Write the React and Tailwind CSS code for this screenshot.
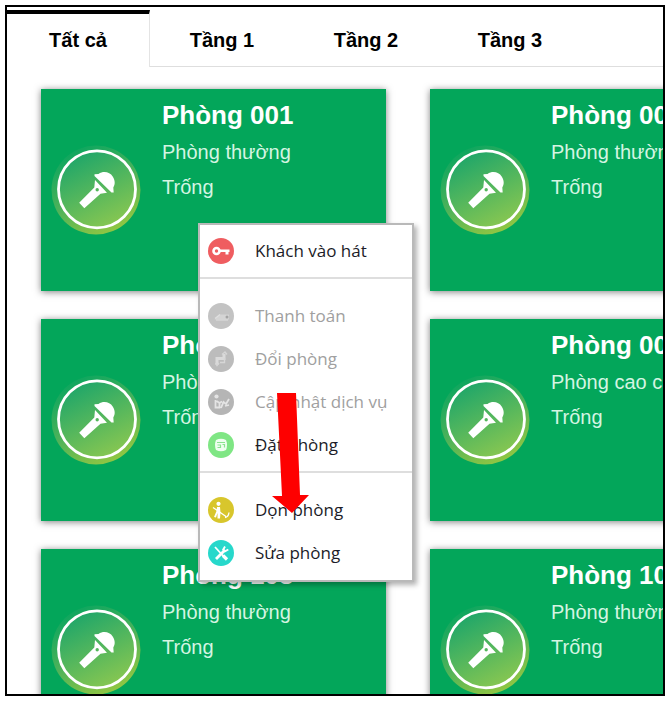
import React, { useState } from "react";

const tabs = ["Tất cả", "Tầng 1", "Tầng 2", "Tầng 3"];

const rooms = [
  { name: "Phòng 001", type: "Phòng thường", status: "Trống" },
  { name: "Phòng 002", type: "Phòng thường", status: "Trống" },
  { name: "Phòng 003", type: "Phòng thường", status: "Trống" },
  { name: "Phòng 004", type: "Phòng cao cấp", status: "Trống" },
  { name: "Phòng 103", type: "Phòng thường", status: "Trống" },
  { name: "Phòng 104", type: "Phòng thường", status: "Trống" },
];

function MicBadge() {
  return (
    <svg viewBox="0 0 90 90" className="h-[90px] w-[90px] shrink-0" aria-hidden="true">
      <defs>
        <linearGradient id="micFill" x1="0.25" y1="0" x2="0.75" y2="1">
          <stop offset="0" stopColor="#1ba56a" />
          <stop offset="1" stopColor="#8cc850" />
        </linearGradient>
        <linearGradient id="micHalo" x1="0.25" y1="0" x2="0.75" y2="1">
          <stop offset="0" stopColor="#08a55f" />
          <stop offset="0.5" stopColor="#4cb25a" />
          <stop offset="1" stopColor="#98c840" />
        </linearGradient>
      </defs>
      <circle cx="45" cy="45" r="44.500" fill="url(#micHalo)" />
      <circle cx="46" cy="44.300" r="38.500" fill="url(#micFill)" stroke="#fff" strokeWidth="2.800" />
      <path
        fill="#fff"
        fillRule="evenodd"
        d="M44 35 L56 47.800 L49.500 48.800 L33.300 63.200 L28.200 57.800 L43.300 42.500 Z M44.500 44.700 a1.700 1.700 0 1 0 3.400 0 a1.700 1.700 0 1 0 -3.400 0 Z"
      />
      <path fill="#fff" d="M43.500 29.300 L47.500 29 C53 25.300 59 27.500 61.700 31.500 C64.300 35.500 64.300 39.500 62.300 42.500 L62.700 47.500 L60.500 47.500 L43.500 31 Z" />
    </svg>
  );
}

function RoomCard({ room }) {
  return (
    <article className="flex h-[202px] gap-[21px] bg-[#03a65a] pl-[10px] text-white shadow-[0_1px_7px_rgba(0,0,0,0.5)]">
      <div className="flex items-center">
        <MicBadge />
      </div>
      <div className="flex flex-col pt-[6px] whitespace-nowrap">
        <h2 className="text-[26px] leading-10 font-bold">{room.name}</h2>
        <p className="text-xl leading-[35px] text-[#d4f5e2]">{room.type}</p>
        <p className="text-xl leading-[35px] text-[#d4f5e2]">{room.status}</p>
      </div>
    </article>
  );
}

const glyphs = {
  key: (
    <>
      <circle cx="8.500" cy="13" r="3" fill="none" stroke="#fff" strokeWidth="2.600" />
      <path d="M12 11.500 H21.500 V14 H20.500 V16.500 H17.500 V14 H12 Z" fill="#fff" />
    </>
  ),
  cash: (
    <>
      <path d="M6.500 16.500 L11.500 11.500 H21 V16.500 Z" fill="#d4d4d4" />
      <path d="M7 15.500 L12 11.500 M8 17 H20" stroke="#e0e0e0" strokeWidth="1.200" fill="none" />
      <circle cx="19" cy="14" r="1.500" fill="#a4a4a4" />
    </>
  ),
  swap: (
    <>
      <path d="M9 19 V12.500 H16 V8" fill="none" stroke="#dadada" strokeWidth="3" />
      <path d="M12 16.500 H16.500 V12 M14 8.500 L17 6 L19 8.500 M7.500 17 L9 19.500 L11 17" fill="none" stroke="#d6d6d6" strokeWidth="1.400" />
    </>
  ),
  service: (
    <>
      <circle cx="8.500" cy="7.500" r="2.100" fill="#e4e4e4" />
      <path d="M7.500 11 V18.500 H11.500 V13 M8.500 12 L11.500 14 L14 12.500 M13 19 L15.500 13 L18 15 L21 10 M17 17 L21 16" fill="none" stroke="#e4e4e4" strokeWidth="1.800" />
    </>
  ),
  book: (
    <>
      <path d="M8 8 Q13 5.500 18 8 Q20 13 18 18 Q13 20.500 8 18 Q6 13 8 8 Z" fill="#effff0" />
      <path d="M9 10.500 H17 M9.500 13 H12.500 V15.500 H9.500 M14.500 12.500 H16.500 V15.500" stroke="#8be58f" strokeWidth="1.200" fill="none" />
    </>
  ),
  clean: (
    <>
      <circle cx="10.500" cy="6.800" r="2.100" fill="#fff" />
      <path d="M9 10 H12 L12.500 15.500 L12 21.500 H9.500 V16 L8 20.500 L6 20 L8.500 14 Z" fill="#fff" />
      <path d="M5 10.500 L18 19.500 M17 20.500 Q20.500 20 21 15.500" fill="none" stroke="#fff" strokeWidth="1.300" />
    </>
  ),
  tools: (
    <>
      <path d="M7 7 L17.500 18.500" stroke="#fff" strokeWidth="1.800" fill="none" />
      <path d="M15 15.500 L19 19.500" stroke="#fff" strokeWidth="3.200" fill="none" />
      <path d="M8 19 L17 10" stroke="#fff" strokeWidth="2.800" fill="none" />
      <path d="M17 6.500 L15.200 9.500 L17 11.300 L20.300 9.500" stroke="#fff" strokeWidth="1.900" fill="none" />
    </>
  ),
};

function MenuItem({ icon, color, label, disabled }) {
  return (
    <li>
      <button
        type="button"
        disabled={disabled}
        className="flex h-[43px] w-full items-center gap-[21px] pl-2 text-left text-[17px] leading-6 whitespace-nowrap text-[#1c1c28] disabled:text-[#a0a0a0]"
      >
        <svg viewBox="0 0 26 26" className="h-[26px] w-[26px] shrink-0" aria-hidden="true">
          <circle cx="13" cy="13" r="13" fill={color} />
          {glyphs[icon]}
        </svg>
        {label}
      </button>
    </li>
  );
}

function Separator() {
  return <li role="separator" className="mt-[5px] mb-[15px] h-[2px] bg-[#dedede]" />;
}

function ContextMenu() {
  return (
    <ul className="absolute top-[216px] left-[191px] w-[216px] border-2 border-[#b9b9b9] bg-white pt-1 pb-[6px] font-['Open_Sans','Noto_Sans',sans-serif] shadow-[3px_3px_5px_rgba(0,0,0,0.3)]">
      <MenuItem icon="key" color="#ef5d60" label="Khách vào hát" />
      <Separator />
      <MenuItem icon="cash" color="#c3c3c3" label="Thanh toán" disabled />
      <MenuItem icon="swap" color="#bcbcbc" label="Đổi phòng" disabled />
      <MenuItem icon="service" color="#b5b5b5" label="Cập nhật dịch vụ" disabled />
      <MenuItem icon="book" color="#7fe684" label="Đặt phòng" />
      <Separator />
      <MenuItem icon="clean" color="#d8c62c" label="Dọn phòng" />
      <MenuItem icon="tools" color="#27d8cb" label="Sửa phòng" />
    </ul>
  );
}

export default function App() {
  const [active, setActive] = useState(0);
  return (
    <div className="flex h-screen flex-col bg-white pt-[5px] pr-[2px] pb-[5px] pl-[5px] font-['Liberation_Sans',Arial,sans-serif]">
      <main className="relative min-h-0 flex-1 overflow-hidden border-2 border-black">
        <nav className="mt-[3px] flex h-[57px]">
          {tabs.map((tab, i) => (
            <button
              key={tab}
              type="button"
              onClick={() => setActive(i)}
              className={
                i === active
                  ? "w-[143px] border-t-4 border-r border-t-black border-r-[#e4e4e4] pb-[2px] text-xl font-bold"
                  : "w-36 border-b border-[#dedede] pt-1 text-xl font-bold"
              }
            >
              {tab}
            </button>
          ))}
          <div className="flex-1 border-b border-[#dedede]" />
        </nav>
        <section className="mt-[22px] ml-[34px] grid grid-cols-[345px_345px] gap-x-[44px] gap-y-7">
          {rooms.map((room) => (
            <RoomCard key={room.name} room={room} />
          ))}
        </section>
        <ContextMenu />
        <svg viewBox="0 0 38 121" className="absolute top-[386px] left-[265px] h-[121px] w-[38px]" aria-hidden="true">
          <path d="M5 0 L24 0 L28 102 L37 102 L20 120 L0 103 L10 103 Z" fill="#fe0000" />
        </svg>
      </main>
    </div>
  );
}
